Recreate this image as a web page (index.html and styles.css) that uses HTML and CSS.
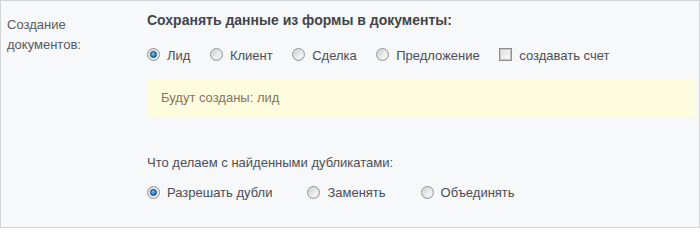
FILE: index.html
```html
<!DOCTYPE html>
<html lang="ru">
<head>
<meta charset="utf-8">
<link rel="stylesheet" href="styles.css">
</head>
<body>
<div class="frame">
  <div class="label-col">Создание<br>документов:</div>
  <div class="main-col">
    <div class="heading">Сохранять данные из формы в документы:</div>
    <div class="opts opts-docs">
      <label class="opt"><span class="radio checked"></span>Лид</label>
      <label class="opt"><span class="radio"></span>Клиент</label>
      <label class="opt"><span class="radio"></span>Сделка</label>
      <label class="opt"><span class="radio"></span>Предложение</label>
      <label class="opt"><span class="check"></span>создавать счет</label>
    </div>
    <div class="notice">Будут созданы: лид</div>
    <div class="question">Что делаем с найденными дубликатами:</div>
    <div class="opts opts-dup">
      <label class="opt"><span class="radio checked"></span>Разрешать дубли</label>
      <label class="opt"><span class="radio"></span>Заменять</label>
      <label class="opt"><span class="radio"></span>Объединять</label>
    </div>
  </div>
</div>
</body>
</html>
```

FILE: styles.css
```css
html, body {
  margin: 0;
  padding: 0;
  background: #ffffff;
}

body {
  font-family: "Liberation Sans", Arial, sans-serif;
  font-size: 13px;
  line-height: 20px;
  color: #4c4f58;
}

.frame {
  box-sizing: border-box;
  width: 700px;
  height: 228px;
  border: 1px solid #d3d3d3;
  background: #f7f8fa;
  display: flex;
}

.label-col {
  width: 140px;
  padding: 14px 0 0 6px;
  color: #555862;
}

.main-col {
  flex: 1;
  padding: 9px 4px 0 0;
  display: flex;
  flex-direction: column;
}

.heading {
  font-weight: bold;
  font-size: 14px;
  color: #42444a;
}

.opts {
  display: flex;
  align-items: flex-start;
  color: #4a4d57;
}

.opts-docs {
  margin-top: 16px;
  gap: 19.5px;
}

.opts-dup {
  margin-top: 10px;
  gap: 35px;
}

.opt {
  display: flex;
  align-items: flex-start;
}

.radio {
  position: relative;
  box-sizing: border-box;
  width: 13px;
  height: 13px;
  margin: 2px 7px 0 0;
  border-radius: 50%;
  border: 1px solid #949494;
  background: linear-gradient(135deg, #c8c8c8 0%, #ebebeb 55%, #ffffff 100%);
  box-shadow: inset 0 0 0 1px #e2e2e2;
}

.radio.checked::after {
  content: "";
  position: absolute;
  left: 2px;
  top: 2px;
  box-sizing: border-box;
  width: 7px;
  height: 7px;
  border-radius: 50%;
  border: 1px solid #0d3d66;
  background: radial-gradient(circle at 40% 35%, #6cc4f4 0%, #2a8ad4 55%, #135a9a 100%);
}

.check {
  box-sizing: border-box;
  width: 13px;
  height: 13px;
  margin: 2px 7px 0 0;
  border: 1px solid #8c8c8c;
  background: linear-gradient(135deg, #d8d8d8 0%, #f0f0f0 60%, #ffffff 100%);
  box-shadow: inset 0 0 0 1px #c8c8c8, inset 0 0 0 2px #ececec;
}

.notice {
  margin-top: 14px;
  height: 37px;
  box-sizing: border-box;
  padding: 8px 14px 9px;
  background: #fefcdf;
  color: #837559;
}

.question {
  margin-top: 36px;
}

.opts-dup .radio {
  margin-top: 3px;
}
```
